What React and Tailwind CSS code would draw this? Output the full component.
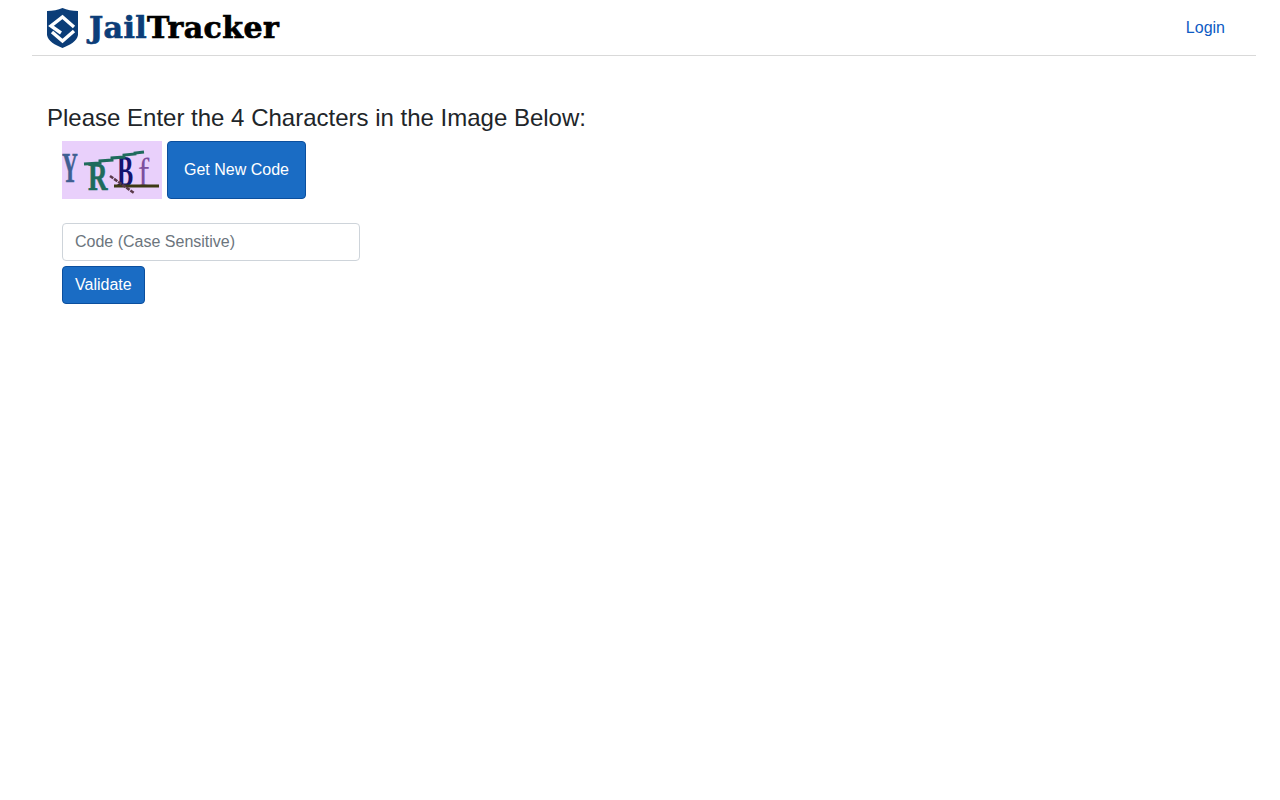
const ShieldLogo = () => (
  <svg width="31" height="40" viewBox="0 0 31 40" className="shrink-0">
    <path d="M0 3 C6 3 11 2 15.5 0 C20 2 25 3 31 3 L31 27 C30 33 23 37 15.5 40 C8 37 1 33 0 27 Z" fill="#0b3d78" />
    <path d="M27 19 L15.5 9 L4 18 L14 25" fill="none" stroke="#fff" strokeWidth="3.4" />
    <path d="M5 24 L15.5 33 L27 23" fill="none" stroke="#fff" strokeWidth="3.4" />
  </svg>
);

const Captcha = () => (
  <svg width="100" height="58" viewBox="0 0 100 58" className="shrink-0 bg-[#e9d0fb]" style={{ fontFamily: '"Liberation Serif", serif' }}>
    <text transform="translate(0 41) scale(0.52 1)" fontSize="42" fontWeight="bold" stroke="#3f5f92" strokeWidth="0.6" fill="#3f5f92">Y</text>
    <text transform="translate(26 49) scale(0.66 1)" fontSize="41" fontWeight="bold" stroke="#1f6b5c" strokeWidth="0.6" fill="#1f6b5c">R</text>
    <text transform="translate(55 45) scale(0.55 1)" fontSize="44" fontWeight="bold" fill="#14146e">B</text>
    <text transform="translate(76 45) scale(0.85 1)" fontSize="40" fill="#7d4f9e">f</text>
    <path d="M22 23 L38 22 L38 20 L50 19 L50 17 L62 16 L62 14 L73 13 L73 12 L82 11" fill="none" stroke="#1f6b5c" strokeWidth="3" />
    <path d="M52 45 L97 45" stroke="#3d3a14" strokeWidth="3" />
    <path d="M48 35 L72 52" stroke="#5a3a4a" strokeWidth="2.5" strokeDasharray="4 1" />
  </svg>
);

const App = () => {
  return (
    <div className="min-h-[800px] bg-white pl-8 pr-6 font-['Liberation_Sans',Arial,sans-serif] text-[#212529]">
      <nav className="flex h-[56px] items-center justify-between border-b border-[#d9d9d9] pl-[15px] pr-[31px]">
        <div className="flex items-center gap-[11px]">
          <ShieldLogo />
          <span className="font-['DejaVu_Serif',serif] text-[30px] font-bold leading-none tracking-[0.4px] [-webkit-text-stroke:0.7px]">
            <span className="text-[#0b3d78]">Jail</span>
            <span className="text-black">Tracker</span>
          </span>
        </div>
        <a href="#" className="text-base text-[#0d5bc4]">Login</a>
      </nav>

      <main className="pl-[15px] pt-[47px]">
        <h4 className="text-2xl leading-[29px]">Please Enter the 4 Characters in the Image Below:</h4>
        <div className="pl-[15px] pt-[9px]">
          <div className="flex items-center gap-[5px]">
            <Captcha />
            <button className="h-[58px] rounded border border-[#0b4f9e] bg-[#1a6cc4] px-4 text-base text-white">
              Get New Code
            </button>
          </div>
          <input
            placeholder="Code (Case Sensitive)"
            className="mt-6 block h-[38px] w-[298px] rounded border border-[#ced4da] px-3 text-base placeholder:text-[#6c757d]"
          />
          <button className="mt-[5px] block h-[38px] rounded border border-[#0b4f9e] bg-[#1a6cc4] px-3 text-base text-white">
            Validate
          </button>
        </div>
      </main>
    </div>
  );
};

export default App;
